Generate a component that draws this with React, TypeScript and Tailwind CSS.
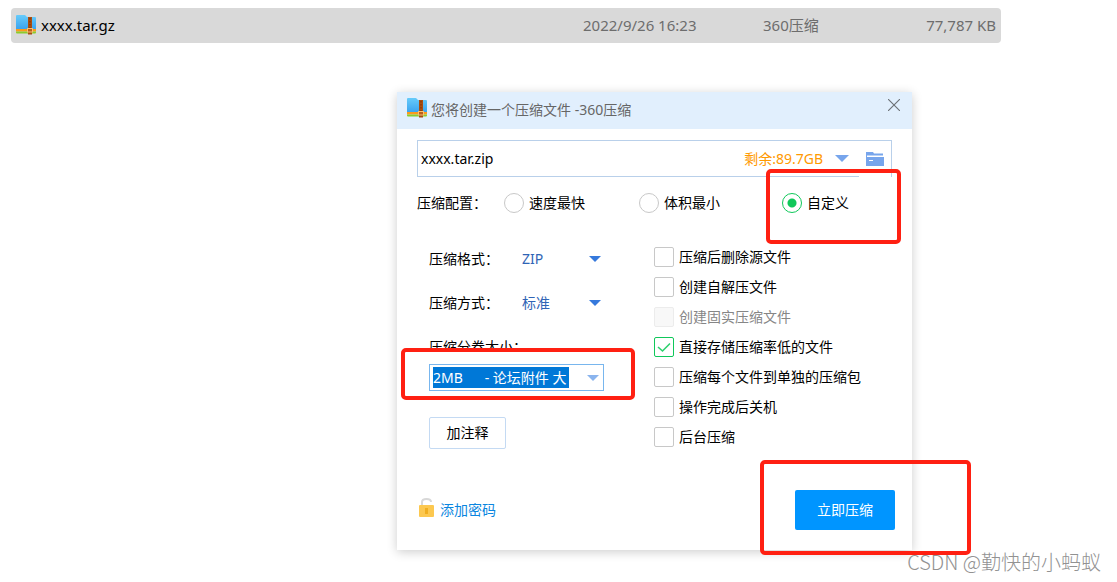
import React, { useState } from "react";

const checks = [
  { label: "压缩后删除源文件" },
  { label: "创建自解压文件" },
  { label: "创建固实压缩文件", disabled: true },
  { label: "直接存储压缩率低的文件", checked: true },
  { label: "压缩每个文件到单独的压缩包" },
  { label: "操作完成后关机" },
  { label: "后台压缩" },
];

const modes = ["速度最快", "体积最小", "自定义"];

function ArchiveIcon() {
  return (
    <svg width="20" height="20" viewBox="0 0 20 20" className="shrink-0" aria-hidden="true">
      <defs>
        <linearGradient id="folder" x1="0" y1="0" x2="0" y2="1">
          <stop offset="0" stopColor="#66cbfa" />
          <stop offset="1" stopColor="#3ba4f0" />
        </linearGradient>
      </defs>
      <path d="M0 1Q0 0 1 0H9L11 2H19Q20 2 20 3V14H0Z" fill="url(#folder)" />
      <path d="M0 14H20V16.500H0Z" fill="#fb9a1c" />
      <path d="M0 16.500H20V17.500Q20 18.500 19 18.500H1Q0 18.500 0 17.500Z" fill="#8ccc2c" />
      <path d="M12 2H16V19.500H12Z" fill="#a84e10" />
      <path d="M14 3V13" stroke="#8a3a08" strokeWidth="1.500" strokeDasharray="1.500 1.500" />
      <rect x="11.500" y="13.500" width="5" height="3.500" fill="#b8601c" stroke="#f8c070" />
    </svg>
  );
}

function Arrow({ className }: { className: string }) {
  return (
    <svg viewBox="0 0 14 7" className={className} aria-hidden="true">
      <path d="M0 0H14L7 7Z" fill="currentColor" />
    </svg>
  );
}

// Red frame drawn over the part to look at
function Mark({ className }: { className: string }) {
  return (
    <span className={`pointer-events-none absolute rounded-[5px] border-4 border-[#ff2012] ${className}`} />
  );
}

export default function App() {
  const [mode, setMode] = useState("自定义");

  return (
    <div className="bg-white pt-2 font-['Noto_Sans','Noto_Sans_CJK_SC',sans-serif] text-sm text-black">
      {/* File row */}
      <div className="ml-[11px] mr-[116px] overflow-hidden rounded-sm bg-[#d9d9d9]">
        <table className="w-full table-fixed text-[15px] text-[#6d6d6d]">
          <tbody>
            <tr className="h-[35px]">
              <td className="text-black">
                <div className="flex items-center gap-[5px] pl-[5px]">
                  <ArchiveIcon />
                  xxxx.tar.gz
                </div>
              </td>
              <td className="w-[180px]">2022/9/26 16:23</td>
              <td className="w-[120px]">360压缩</td>
              <td className="w-[118px] pr-[5px] text-right">77,787 KB</td>
            </tr>
          </tbody>
        </table>
      </div>

      {/* Dialog */}
      <section className="ml-[397px] mt-[49px] max-w-[515px] bg-white shadow-[0_2px_10px_rgba(0,0,0,0.2)]">
        <header className="flex h-[37px] items-start justify-between bg-[#e1effd] pl-[10px] pr-3 pt-[6px]">
          <h1 className="flex items-start gap-1 leading-6 text-[#666]">
            <ArchiveIcon />
            您将创建一个压缩文件 -360压缩
          </h1>
          <button aria-label="关闭" className="mt-px">
            <svg width="12" height="12" viewBox="0 0 12 12" stroke="#6b7075" strokeWidth="1.1">
              <path d="M0 0L12 12M12 0L0 12" />
            </svg>
          </button>
        </header>

        <div className="px-5 pt-[11px]">
          <div className="flex h-[37px] items-center border border-[#b9d0ea] pl-[3px]">
            <input
              aria-label="文件名"
              defaultValue="xxxx.tar.zip"
              className="min-w-0 flex-1 outline-none"
            />
            <span className="text-[#ff9900]">剩余:89.7GB</span>
            <button aria-label="更多位置" className="ml-3 text-[#77a5ec]">
              <Arrow className="h-[7px] w-[14px]" />
            </button>
            <button
              aria-label="选择文件夹"
              className="-mb-[3px] ml-[10px] flex h-[34px] w-8 items-center justify-center bg-white pb-[2px]"
            >
              <svg width="18" height="16" viewBox="0 0 18 16">
                <path d="M0 1H7L8 2.500H17V4.500H0Z" fill="#77a5ec" />
                <path d="M0 4H1V6H0Z" fill="#77a5ec" />
                <path d="M0 6H18V15H0Z" fill="#77a5ec" />
                <path d="M3 9.500H7" stroke="#fff" />
              </svg>
            </button>
          </div>

          {/* Compression mode */}
          <fieldset className="mt-[13px] flex h-[26px] items-center">
            <legend className="float-left w-[87px]">压缩配置：</legend>
            {modes.map((m) => (
              <label
                key={m}
                className="relative flex h-[26px] items-center gap-[5px] first-of-type:w-[135px] nth-of-type-[2]:w-[143px]"
              >
                <input
                  type="radio"
                  name="mode"
                  checked={mode === m}
                  onChange={() => setMode(m)}
                  className="size-5 appearance-none rounded-full border border-[#c8c8c8] checked:border-[#0fc85a] checked:bg-[radial-gradient(circle,#0fc85a_4px,#fff_5px)]"
                />
                {m}
                {m === "自定义" && <Mark className="-left-4 -top-[21px] h-[75px] w-[135px]" />}
              </label>
            ))}
          </fieldset>

          <div className="mt-[31px] flex">
            <div className="w-[237px] shrink-0 pl-3">
              <div className="flex h-6 items-center">
                <label htmlFor="format" className="w-[93px]">压缩格式：</label>
                <select id="format" className="w-[67px] appearance-none text-[#2f64b5] outline-none">
                  <option>ZIP</option>
                  <option>7Z</option>
                </select>
                <Arrow className="pointer-events-none h-[6px] w-3 text-[#3679dc]" />
              </div>
              <div className="mt-5 flex h-6 items-center">
                <label htmlFor="method" className="w-[93px]">压缩方式：</label>
                <select id="method" className="w-[67px] appearance-none text-[#2f64b5] outline-none">
                  <option>标准</option>
                  <option>最快</option>
                </select>
                <Arrow className="pointer-events-none h-[6px] w-3 text-[#3679dc]" />
              </div>
              <label htmlFor="volume" className="mt-5 block leading-6">压缩分卷大小：</label>
              <div className="relative mt-[5px] w-[175px]">
                <Mark className="-left-7 -top-4 h-[52px] w-[234px] bg-white" />
                <div className="relative flex h-[27px] items-center border border-[#78b6ee] bg-white pl-[3px]">
                  <select
                    id="volume"
                    className="h-[21px] w-[136px] appearance-none bg-[#0078d7] text-white outline-none"
                  >
                    <option>{"2MB\u00a0\u00a0\u00a0\u00a0\u00a0 - 论坛附件 大"}</option>
                  </select>
                  <Arrow className="pointer-events-none ml-[18px] h-[6px] w-3 text-[#8ab4ee]" />
                </div>
              </div>
              <button className="mt-[26px] h-8 w-[77px] rounded-xs border border-[#c4daf3]">加注释</button>
            </div>

            <div className="flex flex-col gap-[10px]">
              {checks.map((c) => (
                <label
                  key={c.label}
                  className="flex h-5 items-center gap-[5px] leading-[22px] has-disabled:text-[#868686]"
                >
                  <span className="grid">
                    <input
                      type="checkbox"
                      defaultChecked={c.checked}
                      disabled={c.disabled}
                      className="peer col-start-1 row-start-1 size-5 appearance-none rounded-xs border border-[#c8c8c8] checked:border-[#0fc85a] disabled:border-[#ececec] disabled:bg-[#f8f8f8]"
                    />
                    <svg
                      viewBox="0 0 20 20"
                      className="pointer-events-none invisible col-start-1 row-start-1 size-5 peer-checked:visible"
                    >
                      <path d="M4 10L8.500 14L16 6.500" fill="none" stroke="#2fd16f" strokeWidth="1.600" />
                    </svg>
                  </span>
                  {c.label}
                </label>
              ))}
            </div>
          </div>
        </div>

        <footer className="mt-[41px] flex items-center justify-between pb-5 pl-[22px] pr-[17px]">
          <a href="#password" className="flex items-start gap-[5px] leading-6 text-[#0a86e0]">
            <svg width="16" height="20" viewBox="0 0 16 20">
              <path d="M3 7V4Q3 1 7.500 1Q12 1 12 4" fill="none" stroke="#d8d8d8" strokeWidth="2" />
              <rect y="7" width="15" height="12" rx="1" fill="#fcc850" />
              <path d="M6 10H9V16H6Z" fill="#f0ae20" />
            </svg>
            添加密码
          </a>
          <div className="relative">
            <button className="block h-10 w-[100px] rounded-xs bg-[#0095ff] text-white">立即压缩</button>
            <Mark className="-left-[35px] -top-[30px] h-[95px] w-[211px]" />
          </div>
        </footer>
      </section>

      <p className="relative mr-4 text-right font-['Noto_Sans_CJK_SC',sans-serif] text-xl leading-6 font-light text-[#929292]">
        CSDN @勤快的小蚂蚁
      </p>
    </div>
  );
}
